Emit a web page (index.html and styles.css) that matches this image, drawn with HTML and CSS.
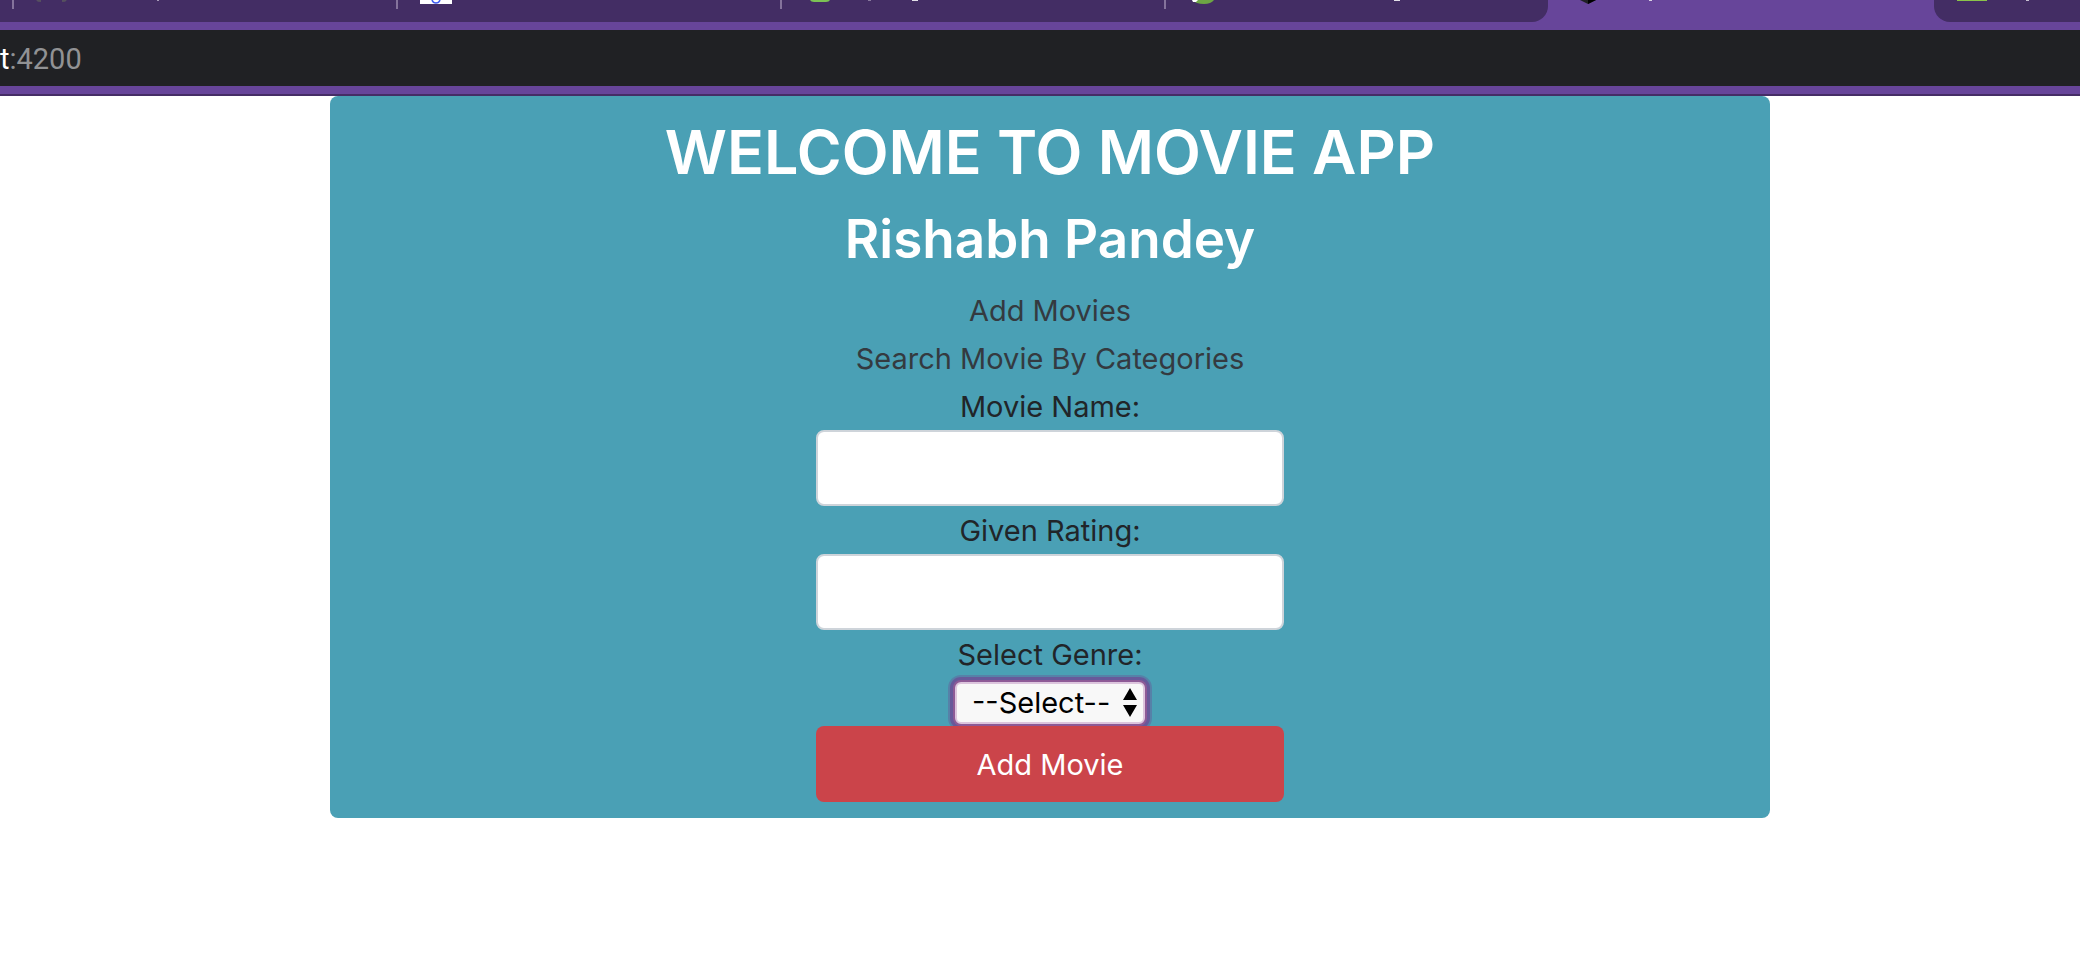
FILE: index.html
```
<!DOCTYPE html>
<html lang="en">
<head>
<meta charset="utf-8">
<title>Movie App</title>
<link rel="stylesheet" href="styles.css">
</head>
<body>
<header class="browser">
  <div class="tabs">
    <div class="tab-group tab-group-left">
      <div class="tab tab-edge"></div>
      <div class="tab">
        <svg class="tab-art" viewBox="0 0 160 22" aria-hidden="true"><path d="M24 0q1 1 4 1M53 0q-1 1-4 1" transform="translate(-1 0)" stroke="#56505f" stroke-width="2" fill="none"/><path d="M143 0h2v1h-2z" fill="#a79bb8"/></svg>
      </div>
      <div class="tab">
        <svg class="tab-art" viewBox="0 0 160 22" aria-hidden="true"><path d="M22 0h32v4H22z" fill="#fff"/><path d="M34 0q1 3 4 3t4-3" stroke="#3f5cf0" stroke-width="1.5" fill="none"/></svg>
      </div>
      <div class="tab">
        <svg class="tab-art" viewBox="0 0 160 22" aria-hidden="true"><path d="M28 0h20q-1 2-4 2H32q-3 0-4-2z" fill="#7cc254"/><path d="M86 0h3v1h-3z" fill="#88799d"/><path d="M130 0h6v1h-6z" fill="#e3dfe8"/></svg>
      </div>
      <div class="tab tab-last">
        <svg class="tab-art" viewBox="0 0 260 22" aria-hidden="true"><path d="M26 0h22q-3 4-10 4-8 0-12-4z" fill="#6da544"/><path d="M26 0h6l-2 2h-3z" fill="#fff"/><path d="M228 0h6v1h-6z" fill="#e3dfe8"/></svg>
      </div>
    </div>
    <div class="tab tab-active">
      <svg class="tab-art" viewBox="0 0 160 22" aria-hidden="true"><path d="M32 0h16l-8 4z" fill="#202124"/><path d="M40 0h8l-8 4z" fill="#000"/><path d="M101 0h3v1h-3z" fill="#d9d1e5"/></svg>
    </div>
    <div class="tab-group tab-group-right">
      <svg class="tab-art" viewBox="0 0 160 22" aria-hidden="true"><path d="M23 0h30v1H23z" fill="#8bc34a"/><path d="M92 0h3v1h-3z" fill="#c5bdd0"/></svg>
    </div>
  </div>
  <div class="address"><span class="host">t</span>:4200</div>
</header>
<main class="page">
  <section class="panel">
    <h1 class="title">WELCOME TO MOVIE APP</h1>
    <h2 class="author">Rishabh Pandey</h2>
    <nav class="links">
      <a class="link" href="#add">Add Movies</a>
      <a class="link" href="#search">Search Movie By Categories</a>
    </nav>
    <form class="form">
      <label class="label" for="movie">Movie Name:</label>
      <input class="field" id="movie" type="text">
      <label class="label" for="rating">Given Rating:</label>
      <input class="field" id="rating" type="text">
      <label class="label" for="genre">Select Genre:</label>
      <div class="select-row">
        <div class="select-box">
          <select class="select" id="genre"><option>--Select--</option></select>
          <svg class="arrows" viewBox="0 0 14 29" aria-hidden="true"><path d="M7 0l7 12H0zM7 29l7-12H0z"/></svg>
        </div>
      </div>
      <button class="button" type="button">Add Movie</button>
    </form>
  </section>
</main>
</body>
</html>
```
FILE: styles.css
```
* { box-sizing: border-box; }
body {
  margin: 0;
  background: #fff;
  color: #212529;
  font-family: Inter, "Liberation Sans", sans-serif;
  font-size: 29px;
  line-height: 48px;
}
.browser {
  background: #67459a;
  border-bottom: 2px solid #452d66;
  padding-bottom: 8px;
}
.tabs { display: flex; height: 22px; margin-bottom: 8px; overflow: hidden; }
.tab-group { display: flex; background: #432d64; }
.tab-group-left { flex-shrink: 0; border-bottom-right-radius: 16px; }
.tab-group-right { flex: 1; min-width: 0; overflow: hidden; border-bottom-left-radius: 16px; }
.tab { width: 384px; flex-shrink: 0; position: relative; }
.tab-edge { width: 14px; }
.tab-last { width: 382px; }
.tab-active { width: 386px; }
.tab-group-left .tab:not(.tab-last)::after {
  content: "";
  position: absolute;
  top: 0;
  right: 0;
  width: 2px;
  height: 9px;
  background: #85739c;
}
.tab-art { display: block; height: 22px; flex-shrink: 0; }
.address {
  height: 56px;
  line-height: 58px;
  background: #202124;
  color: #919294;
  font-family: Roboto, sans-serif;
  font-size: 29px;
}
.host { color: #fff; }
.page { padding-left: 20px; }
.panel {
  max-width: 1440px;
  margin: 0 auto;
  padding: 16px;
  background: #4aa0b5;
  border-radius: 8px;
  text-align: center;
}
.title, .author { margin: 0 0 12px; color: #fff; font-weight: 600; }
.title { font-size: 61px; line-height: 80px; }
.author { font-size: 53px; line-height: 70px; }
.links, .form { display: flex; flex-direction: column; align-items: center; }
.link { color: #343a40; text-decoration: none; }
.link, .label { height: 48px; line-height: 50px; }
.field, .button {
  width: 468px;
  max-width: 100%;
  height: 76px;
  border-radius: 8px;
  font: inherit;
}
.field { background: #fff; border: 2px solid #ced4da; padding: 12px 24px; }
.button { position: relative; background: #cb444a; border: 0; padding: 2px 0 0; color: #fff; }
.select-row { height: 48px; padding-top: 4px; }
.select-box { position: relative; }
.select {
  display: block;
  appearance: none;
  width: 190px;
  height: 42px;
  padding: 0 0 0 15px;
  border: 2px solid #dcc5dd;
  border-radius: 6px;
  outline: 0;
  background: #f8f8f8;
  color: #000;
  font: inherit;
  line-height: 36px;
  box-shadow: 0 0 0 2px #8d5a96, 0 0 0 5px #67599a, 0 0 0 7px #5681a8;
}
.arrows { position: absolute; top: 6px; right: 8px; width: 14px; height: 29px; pointer-events: none; }
```
